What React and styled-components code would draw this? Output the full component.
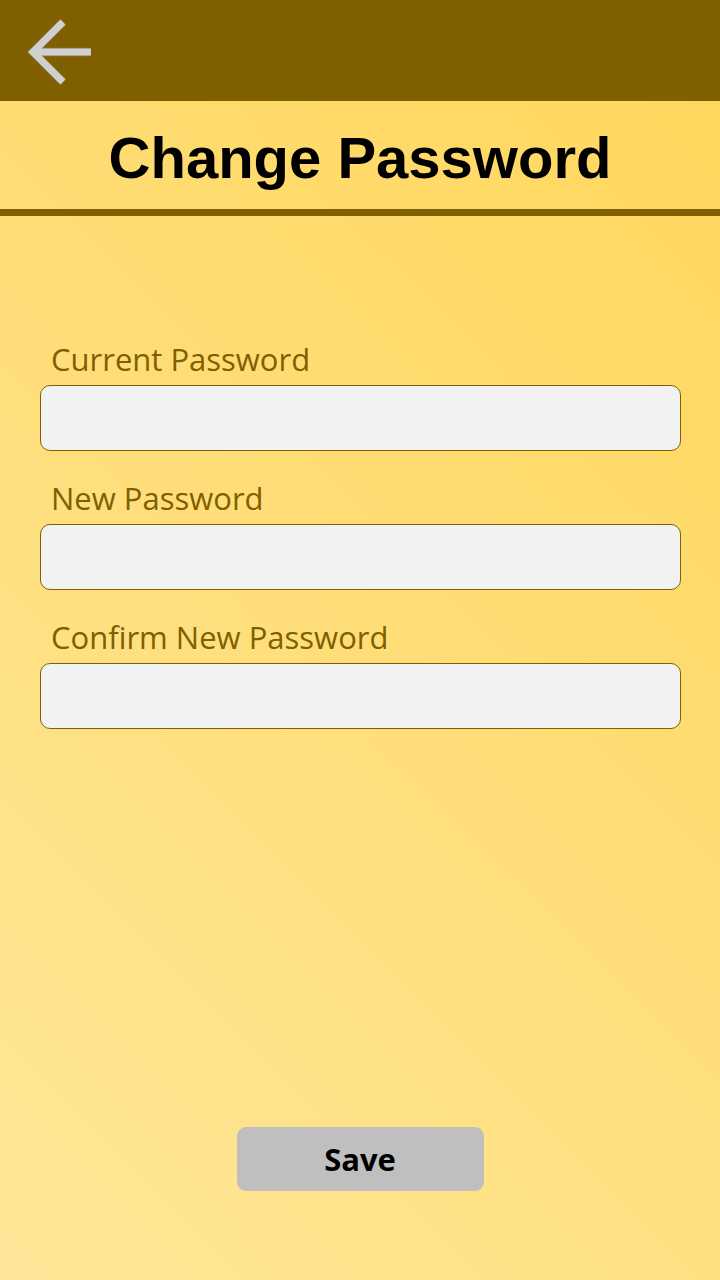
import React from 'react';
import styled, { createGlobalStyle } from 'styled-components';

const Global = createGlobalStyle`
  html, body { margin: 0; padding: 0; }
  body { font-family: 'Open Sans', 'Liberation Sans', sans-serif; }
`;

const Page = styled.div`
  width: 720px;
  height: 1280px;
  display: flex;
  flex-direction: column;
  background: linear-gradient(225deg, #ffd75b 0%, #ffdd75 45%, #ffe699 100%);
  overflow: hidden;
`;

const TopBar = styled.div`
  height: 101px;
  background: #7f5f00;
  display: flex;
  align-items: flex-start;
  padding: 19px 0 0 22px;
  box-sizing: border-box;
`;

const BackButton = styled.button`
  border: none;
  background: none;
  padding: 0;
  width: 76px;
  height: 68px;
  cursor: pointer;
  display: flex;
`;

const TitleBand = styled.div`
  height: 115px;
  display: flex;
  align-items: center;
  justify-content: center;
  padding-top: 4px;
  box-sizing: border-box;
  border-bottom: 7px solid #7f5f00;
`;

const Title = styled.h1`
  margin: 0;
  font-family: 'Liberation Sans', Arial, sans-serif;
  font-weight: 700;
  font-size: 58px;
  color: #000;
`;

const Form = styled.div`
  display: flex;
  flex-direction: column;
  padding: 123px 39px 0 40px;
  gap: 27px;
`;

const Field = styled.label`
  display: flex;
  flex-direction: column;
  gap: 6px;
`;

const Label = styled.span`
  font-size: 31px;
  line-height: 40px;
  color: #7f5f00;
  padding-left: 11px;
`;

const Input = styled.input`
  height: 66px;
  box-sizing: border-box;
  background: #f2f2f2;
  border: 1px solid #7f5f00;
  border-radius: 10px;
  font-size: 26px;
  padding: 0 12px;
  outline: none;
`;

const Footer = styled.div`
  margin-top: auto;
  display: flex;
  justify-content: center;
  padding-bottom: 89px;
`;

const SaveButton = styled.button`
  width: 247px;
  height: 64px;
  border: none;
  border-radius: 9px;
  background: #bfbfbf;
  font-family: 'Open Sans', sans-serif;
  font-weight: 700;
  font-size: 31px;
  color: #000;
  cursor: pointer;
`;

const fields = ['Current Password', 'New Password', 'Confirm New Password'];

export default function App() {
  return (
    <Page>
      <Global />
      <TopBar>
        <BackButton aria-label="Back">
          <svg width="76" height="68" viewBox="0 0 76 68">
            <path d="M41 3 L11 33 L41 63 M11 33 H69" fill="none" stroke="#8a7a48" strokeWidth="8.5" />
            <path d="M41 3 L11 33 L41 63 M11 33 H69" fill="none" stroke="#d0d0d0" strokeWidth="7" />
          </svg>
        </BackButton>
      </TopBar>
      <TitleBand>
        <Title>Change Password</Title>
      </TitleBand>
      <Form>
        {fields.map((f) => (
          <Field key={f}>
            <Label>{f}</Label>
            <Input type="password" />
          </Field>
        ))}
      </Form>
      <Footer>
        <SaveButton>Save</SaveButton>
      </Footer>
    </Page>
  );
}
